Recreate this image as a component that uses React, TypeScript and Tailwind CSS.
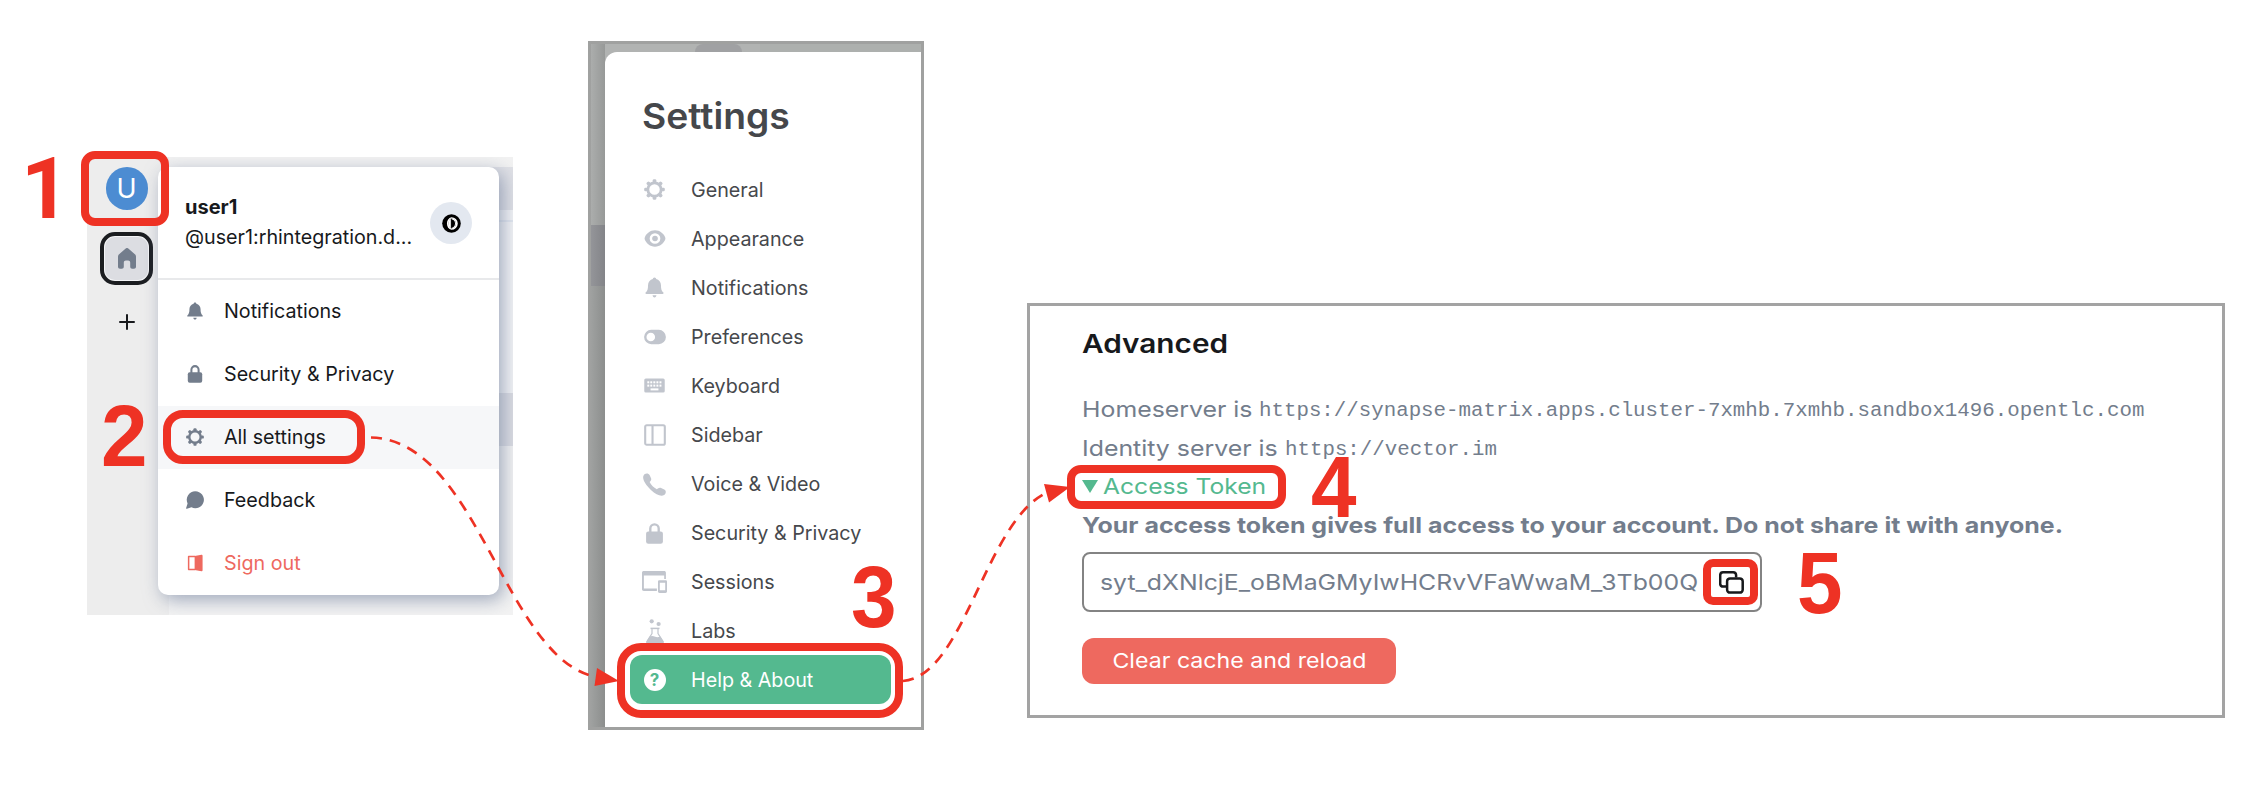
import React from 'react';

type IconProps = { className?: string };

const teeth = [0, 45, 90, 135, 180, 225, 270, 315];

function Gear({ className }: IconProps) {
  return (
    <svg viewBox="0 0 24 24" className={className} fill="currentColor">
      <circle cx="12" cy="12" r="7.6" fill="none" stroke="currentColor" strokeWidth="3.2" />
      {teeth.map((a) => (
        <rect key={a} x="9.9" y="0.2" width="4.2" height="4.6" rx="1.6" transform={`rotate(${a} 12 12)`} />
      ))}
    </svg>
  );
}

function Eye({ className }: IconProps) {
  return (
    <svg viewBox="0 0 24 24" className={className} fill="currentColor">
      <path
        fillRule="evenodd"
        d="M12 2.7C6.2 2.7 2.2 6.6 0.4 10.6a3.4 3.4 0 0 0 0 2.8C2.2 17.4 6.2 21.3 12 21.3s9.8-3.9 11.6-7.9a3.4 3.4 0 0 0 0-2.8C21.8 6.6 17.8 2.7 12 2.7Zm0 3.2a6.1 6.1 0 1 1 0 12.2 6.1 6.1 0 0 1 0-12.2Z"
      />
      <circle cx="12" cy="12" r="3.2" />
    </svg>
  );
}

function Bell({ className }: IconProps) {
  return (
    <svg viewBox="0 0 24 24" className={className} fill="currentColor">
      <path d="M12 0.5c-1.2 0-1.9.9-1.9 1.9C6.9 3.3 4.6 6 4.600 9.300c0 4.200-.7 6.700-2.500 8.200-.9.8-.5 1.800.6 1.800h18.600c1.100 0 1.500-1 .6-1.800C20.100 16 19.400 13.500 19.400 9.300c0-3.300-2.300-6-5.500-6.900 0-1-.7-1.900-1.900-1.900Z" />
      <path d="M9.800 20.900h4.400c0 1.400-1 2.500-2.200 2.500s-2.200-1.100-2.200-2.500Z" />
    </svg>
  );
}

function Toggle({ className }: IconProps) {
  return (
    <svg viewBox="0 0 24 24" className={className} fill="currentColor">
      <path fillRule="evenodd" d="M7.9 4.2h8.2a7.8 7.8 0 0 1 0 15.6H7.9a7.8 7.8 0 0 1 0-15.6Zm-.5 3.1a4.7 4.7 0 1 0 0 9.4 4.7 4.7 0 0 0 0-9.4Z" />
    </svg>
  );
}

function Keyboard({ className }: IconProps) {
  return (
    <svg viewBox="0 0 24 24" className={className}>
      <rect x="0.3" y="4" width="23.4" height="16" rx="1.8" fill="currentColor" />
      {[3.8, 7.2, 10.7, 14.2, 17.7].map((x) => (
        <React.Fragment key={x}>
          <rect x={x} y="7.2" width="2.2" height="2.3" fill="white" />
          <rect x={x} y="11" width="2.2" height="2.3" fill="white" />
        </React.Fragment>
      ))}
      <rect x="7.5" y="15.3" width="9" height="2.3" fill="white" />
    </svg>
  );
}

function Sidebar({ className }: IconProps) {
  return (
    <svg viewBox="0 0 24 24" className={className} fill="none" stroke="currentColor" strokeWidth="2.3">
      <rect x="1.3" y="1.3" width="21.4" height="21.4" rx="1.7" />
      <path d="M9.3 1.5v21" />
    </svg>
  );
}

function Phone({ className }: IconProps) {
  return (
    <svg viewBox="0 0 24 24" className={className} fill="currentColor">
      <path d="M0.5 2.8C1.7-.2 5.7-.3 7 2.300l1.500 3.400C9 7.200 7.800 8.300 6.900 9.500c1.700 3.200 4.300 5.800 7.500 7.500 1.300-.9 2.400-2 3.900-1.500l3.900 1.600c2.300 1.300 2 4.300-.2 5.900-2.700 1.800-8.200.3-13.700-5.200C2.500 12-1 6.500.5 2.800Z" />
    </svg>
  );
}

function Lock({ className }: IconProps) {
  return (
    <svg viewBox="0 0 24 24" className={className}>
      <path d="M7.2 11V6.3a4.8 4.8 0 0 1 9.6 0V11" fill="none" stroke="currentColor" strokeWidth="2.7" />
      <rect x="2.4" y="9.8" width="19.2" height="13.8" rx="2.5" fill="currentColor" />
    </svg>
  );
}

function Sessions({ className }: IconProps) {
  return (
    <svg viewBox="0 0 25 22" className={className} fill="currentColor">
      <path fillRule="evenodd" d="M1.8 0h20.4c1 0 1.7.7 1.7 1.7V8h-1.7V4.5H1.9v13h13V20H1.800C.7 20 0 19.300 0 18.300V1.700C0 .7.7 0 1.800 0Z" />
      <path fillRule="evenodd" d="M17.5 9.3h6c.9 0 1.5.5 1.5 1.4v9.900c0 .9-.6 1.400-1.500 1.400h-6c-.9 0-1.500-.5-1.500-1.400v-9.900c0-.9.6-1.400 1.500-1.400Zm.3 2.500v7.400h5.400v-7.400h-5.400Z" />
    </svg>
  );
}

function Flask({ className }: IconProps) {
  return (
    <svg viewBox="0 0 18 25" className={className} fill="currentColor">
      <circle cx="5.7" cy="2.3" r="2.1" />
      <circle cx="12.6" cy="5" r="2.1" />
      <path d="M4.5 9.4h9" stroke="currentColor" strokeWidth="1.5" />
      <path d="M6 9.5v5L1 22.3c-.6 1 0 2.1 1.2 2.1h13.6c1.2 0 1.8-1.1 1.2-2.1L12 14.5v-5" fill="none" stroke="currentColor" strokeWidth="1.2" />
      <path d="M3.6 17.6c2-1 3.8-.6 5.6.2 1.8.7 3.4.5 5-.4l3 4.9c.6 1 0 2.3-1.2 2.3H2c-1.2 0-1.8-1.3-1.2-2.3l2.8-4.7Z" />
    </svg>
  );
}

function Chat({ className }: IconProps) {
  return (
    <svg viewBox="0 0 24 24" className={className} fill="currentColor">
      <path d="M12.500 0.500a11.300 11.300 0 1 1-5.200 21.300L1.200 23.600c-.7.2-1.200-.4-1-1l1.900-5.900A11.300 11.300 0 0 1 12.500.5Z" />
    </svg>
  );
}

function Door({ className }: IconProps) {
  return (
    <svg viewBox="0 0 24 24" className={className}>
      <path d="M12 3.300H3.500v17.400H12" fill="none" stroke="currentColor" strokeWidth="2" strokeLinejoin="round" />
      <path d="M11.500 2.800 20.600 1c.9-.2 1.500.3 1.500 1.200v19.600c0 .9-.6 1.400-1.500 1.200l-9.100-1.800Z" fill="currentColor" />
    </svg>
  );
}

function Home({ className }: IconProps) {
  return (
    <svg viewBox="0 0 18 21" className={className} fill="currentColor">
      <path d="M7.700.5a2 2 0 0 1 2.600 0l6.600 5.700c.7.6 1.100 1.300 1.100 2.200v10.400c0 1.200-.8 2-2 2h-1.800c-1.200 0-2-.8-2-2v-4.300c0-1.200-.9-2-2-2H7.800c-1.100 0-2 .8-2 2v4.300c0 1.200-.8 2-2 2H2c-1.200 0-2-.8-2-2V8.400c0-.9.4-1.600 1.100-2.200Z" />
    </svg>
  );
}

function Contrast({ className }: IconProps) {
  return (
    <svg viewBox="0 0 20 20" className={className}>
      <circle cx="10" cy="10" r="9.800" fill="black" />
      <path d="M9.900 3.300a6.700 6.700 0 0 1 0 13.400C7.100 16 5.200 13.400 5.200 10s1.900-6 4.700-6.700Z" fill="white" />
      <path d="M9.600 4.800a5.200 5.200 0 0 1 0 10.400C7.800 14.300 7 12.300 7 10s.8-4.300 2.600-5.200Z" fill="black" />
      <path d="M10.200 4.600a5.400 5.400 0 0 1 4.500 5.400 5.400 5.400 0 0 1-4.500 5.400Z" fill="white" />
      <path d="M9.600 5.400a4.600 4.600 0 0 1 4.100 4.600 4.600 4.600 0 0 1-4.100 4.600Z" fill="black" />
      <path d="M9.300 5v10C7.600 14.300 6.800 12.300 6.800 10S7.600 5.700 9.300 5Z" fill="white" />
    </svg>
  );
}

function Copy({ className }: IconProps) {
  return (
    <svg viewBox="0 0 25 23" className={className} fill="none" stroke="#17191c" strokeWidth="2.500">
      <path d="M7 15.600H4.200a3 3 0 0 1-3-2.700V4A2.900 2.900 0 0 1 4.200 1.300h10A2.900 2.900 0 0 1 17.100 4v2.600" />
      <rect x="8.100" y="7.400" width="15.600" height="14.200" rx="2.900" />
    </svg>
  );
}

const menuItems = [
  { label: 'Notifications', Icon: Bell },
  { label: 'Security & Privacy', Icon: Lock },
  { label: 'All settings', Icon: Gear, active: true },
  { label: 'Feedback', Icon: Chat },
  { label: 'Sign out', Icon: Door, danger: true },
];

function UserMenuPanel() {
  return (
    <section className="relative mt-[157px] ml-[87px] flex h-[458px] w-[426px] shrink-0 overflow-hidden bg-[#f2f2f2]">
      <nav className="flex w-[82px] shrink-0 flex-col items-center bg-[#ededed] pt-[10px] pr-[3px]">
        <div className="flex h-[43px] w-[42px] items-center justify-center rounded-full bg-[#4c8cd2] text-[27px] leading-none text-white">U</div>
        <div className="mt-[22px] flex h-[53px] w-[53px] items-center justify-center rounded-[15px] border-4 border-[#1b1d20] bg-[#f4f5f7] p-px">
          <div className="flex h-full w-full items-center justify-center rounded-[10px] bg-[#dcdde2]">
            <Home className="h-[21px] w-[18px] text-[#737d8c]" />
          </div>
        </div>
        <svg viewBox="0 0 16 16" className="mt-[29px] h-4 w-4" stroke="#17191c" strokeWidth="2" strokeLinecap="round">
          <path d="M8 1v14M1 8h14" />
        </svg>
      </nav>
      <div className="flex flex-1 flex-col">
        <div className="h-[10px] bg-[#f2f2f2]" />
        <div className="h-[43px] bg-[#e0e1e6]" />
        <div className="h-[10px] bg-[#f3f4f6]" />
        <div className="h-[2px] bg-[#e3e8f0]" />
        <div className="h-[171px] bg-[#f3f4f6]" />
        <div className="h-[53px] bg-[#dcdde3]" />
        <div className="flex-1 bg-[#f3f3f3]" />
      </div>
      <div className="absolute top-[10px] left-[71px] flex h-[428px] w-[341px] flex-col overflow-visible rounded-[10px] bg-white shadow-[4px_5px_18px_rgba(108,122,154,0.62)]">
        <header className="flex h-[111px] items-start pt-[25px] pl-[27px]">
          <div className="w-[245px] text-xl leading-[30px] whitespace-nowrap text-[#17191c]">
            <div className="font-bold">user1</div>
            <div className="origin-left scale-x-[.985]">@user1:rhintegration.d...</div>
          </div>
          <div className="mt-[10px] flex h-[42px] w-[42px] items-center justify-center rounded-full bg-[#e3e8f0]">
            <Contrast className="h-[19px] w-[19px]" />
          </div>
        </header>
        <div className="h-[2px] bg-[#e8e9eb]" />
        <ul>
          {menuItems.map(({ label, Icon, active, danger }) => (
            <li
              key={label}
              className={`flex h-[63px] items-center pb-[2px] pl-[28px] text-xl ${active ? 'bg-[#f6f7f9]' : ''} ${danger ? 'text-[#ee695f]' : 'text-[#17191c]'}`}
            >
              <Icon className={`h-[18px] w-[18px] shrink-0 ${danger ? '' : 'text-[#737d8c]'}`} />
              <span className="ml-[20px] origin-left scale-x-[.985] whitespace-nowrap">{label}</span>
            </li>
          ))}
        </ul>
      </div>
    </section>
  );
}

const tabs = [
  { label: 'General', Icon: Gear, size: 'h-[21px] w-[21px]' },
  { label: 'Appearance', Icon: Eye, size: 'h-[21px] w-[22px]' },
  { label: 'Notifications', Icon: Bell, size: 'h-[21px] w-[21px]' },
  { label: 'Preferences', Icon: Toggle, size: 'h-[22px] w-[22px]' },
  { label: 'Keyboard', Icon: Keyboard, size: 'h-[21px] w-[21px]' },
  { label: 'Sidebar', Icon: Sidebar, size: 'h-[22px] w-[22px]' },
  { label: 'Voice & Video', Icon: Phone, size: 'h-[23px] w-[23px]' },
  { label: 'Security & Privacy', Icon: Lock, size: 'h-[21px] w-[21px]' },
  { label: 'Sessions', Icon: Sessions, size: 'h-[22px] w-[25px]' },
  { label: 'Labs', Icon: Flask, size: 'h-[25px] w-[18px]' },
];

function SettingsPanel() {
  return (
    <section className="mt-[41px] ml-[75px] flex h-[689px] w-[336px] shrink-0 overflow-hidden border-[3px] border-[#a0a1a0] bg-[#b1b3b2]">
      <div className="flex w-[14px] shrink-0 flex-col">
        <div className="h-[181px] bg-linear-to-r from-[#abadac] to-[#979998]" />
        <div className="h-[61px] bg-linear-to-r from-[#949599] to-[#838488]" />
        <div className="flex-1 bg-linear-to-r from-[#9fa1a0] to-[#8c8e8d]" />
      </div>
      <div className="flex flex-1 flex-col">
        <div className="flex h-[8px]">
          <div className="w-[90px]" />
          <div className="w-[47px] rounded-t-[8px] bg-[#a0a1a3]" />
          <div className="w-[18px]" />
          <div className="flex-1 bg-[#adb0ae]" />
        </div>
        <div className="flex-1 rounded-tl-[12px] bg-white pl-[25px]">
          <h1 className="mt-[39px] ml-[12px] h-[50px] origin-left scale-x-[1.035] text-[36px] leading-[50px] font-semibold text-[#45474b]">Settings</h1>
          <ul className="mt-[23px]">
            {tabs.map(({ label, Icon, size }) => (
              <li key={label} className="flex h-[49.1px] items-center pt-[2px] text-xl text-[#46484c]">
                <span className="flex w-[49px] shrink-0 justify-center text-[#c1c5cd]">
                  <Icon className={size} />
                </span>
                <span className="ml-[12px] origin-left scale-x-[.985] whitespace-nowrap">{label}</span>
              </li>
            ))}
            <li className="flex h-[49px] w-[261px] items-center rounded-[12px] bg-[#54b98f] pt-[2px] text-xl text-white">
              <span className="flex w-[49px] shrink-0 justify-center">
                <span className="flex h-[22px] w-[22px] items-center justify-center rounded-full bg-white text-[17px] leading-none font-bold text-[#54b98f]">?</span>
              </span>
              <span className="ml-[12px] origin-left scale-x-[.985] whitespace-nowrap">Help &amp; About</span>
            </li>
          </ul>
        </div>
      </div>
    </section>
  );
}

function AdvancedPanel() {
  return (
    <section className="mt-[303px] ml-[103px] h-[415px] w-[1198px] shrink-0 border-[3px] border-[#a3a3a3] bg-white pl-[52px] text-[22px] text-[#737d8c]">
      <h2 className="mt-[18px] h-[40px] w-[200px] origin-left scale-x-[1.145] text-[26px] leading-[40px] font-semibold text-[#17191c]">Advanced</h2>
      <div className="mt-[26px] leading-[38.6px] whitespace-nowrap">
        <div className="flex h-[38.6px]">
          <span className="w-[177px] origin-left scale-x-[1.13]">Homeserver is</span>
          <span className="origin-left scale-x-[1.039] font-['Liberation_Mono',monospace] text-xl leading-[41px]">
            https://synapse-matrix.apps.cluster-7xmhb.7xmhb.sandbox1496.opentlc.com
          </span>
        </div>
        <div className="flex h-[38.6px]">
          <span className="w-[203px] origin-left scale-x-[1.13]">Identity server is</span>
          <span className="origin-left scale-x-[1.039] font-['Liberation_Mono',monospace] text-xl leading-[41px]">https://vector.im</span>
        </div>
        <div className="flex h-[38.6px] items-center text-[#54b98f]">
          <svg viewBox="0 0 16 13" className="h-[13px] w-4" fill="currentColor">
            <path d="M0 0h16L8 13Z" />
          </svg>
          <span className="ml-[5px] origin-left scale-x-[1.12]">Access Token</span>
        </div>
        <div className="h-[38.6px] w-[900px] origin-left scale-x-[1.134] font-bold">
          Your access token gives full access to your account. Do not share it with anyone.
        </div>
      </div>
      <div className="mt-[8px] flex h-[60px] w-[680px] items-center rounded-[8px] border-[2px] border-[#838383] pl-[16px]">
        <span className="w-[619px] origin-left scale-x-[1.128] whitespace-nowrap">syt_dXNlcjE_oBMaGMyIwHCRvVFaWwaM_3Tb00Q</span>
        <Copy className="h-[23px] w-[25px] shrink-0" />
      </div>
      <button className="mt-[26px] flex h-[46px] w-[314px] items-center justify-center rounded-[12px] bg-[#ee695f] text-[20.5px] whitespace-nowrap text-white">
        <span className="scale-x-[1.13]">Clear cache and reload</span>
      </button>
    </section>
  );
}

function Callouts() {
  return (
    <div className="pointer-events-none absolute inset-0 font-['Liberation_Sans',sans-serif] text-[88px] leading-[88px] font-bold text-[#ee3224]">
      <svg viewBox="0 0 2252 798" className="absolute inset-0 h-full w-full" fill="none" stroke="#ee3224" strokeWidth="2.7">
        <path d="M371 437.5C480 440 505 665 600 677.5" strokeDasharray="11 8" />
        <path d="M903 681C965 676 985 520 1048 492" strokeDasharray="11 8" />
        <path d="M597 668 619 681 594.5 686Z" fill="#ee3224" stroke="none" />
        <path d="M1044 484 1070 487 1049 502.5Z" fill="#ee3224" stroke="none" />
      </svg>
      <div className="absolute top-[151px] left-[81px] h-[75px] w-[88px] rounded-[14px] border-8 border-[#ee3224]" />
      <div className="absolute top-[410px] left-[163px] h-[54px] w-[202px] rounded-[20px] border-8 border-[#ee3224]" />
      <div className="absolute top-[643px] left-[617px] h-[75px] w-[286px] rounded-[24px] border-8 border-[#ee3224]" />
      <div className="absolute top-[465px] left-[1067px] h-[44px] w-[219px] rounded-[14px] border-8 border-[#ee3224]" />
      <div className="absolute top-[559px] left-[1703px] h-[46px] w-[55px] rounded-[10px] border-8 border-[#ee3224]" />
      <span className="absolute top-[145px] left-[21px] font-['Roboto',sans-serif] text-[85px]">1</span>
      <span className="absolute top-[392px] left-[101px] origin-left scale-x-[.95]">2</span>
      <span className="absolute top-[553px] left-[851px] origin-left scale-x-[.93]">3</span>
      <span className="absolute top-[443px] left-[1311px] origin-left scale-x-[.93]">4</span>
      <span className="absolute top-[539px] left-[1797px] origin-left scale-x-[.93]">5</span>
    </div>
  );
}

export default function App() {
  return (
    <main className="relative flex h-[798px] w-[2252px] items-start overflow-hidden bg-white font-['Inter',sans-serif]">
      <UserMenuPanel />
      <SettingsPanel />
      <AdvancedPanel />
      <Callouts />
    </main>
  );
}
